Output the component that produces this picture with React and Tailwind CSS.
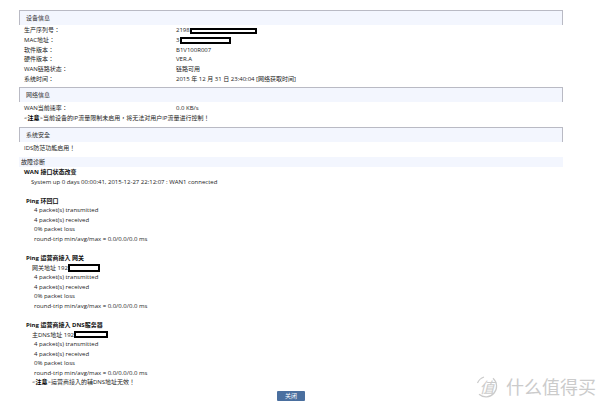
import React from 'react';

const deviceRows = [
  { label: '生产序列号：', value: '2198', mask: 'h-[6px] w-[67px]' },
  { label: 'MAC地址：', value: '3', mask: 'h-[7px] w-[51px] ml-px' },
  { label: '软件版本：', value: 'B1V100R007' },
  { label: '硬件版本：', value: 'VER.A' },
  { label: 'WAN链路状态：', value: '链路可用' },
  { label: '系统时间：', value: '2015 年 12 月 31 日 23:40:04 [网络获取时间]' },
];

const pingResult = [
  '4 packet(s) transmitted',
  '4 packet(s) received',
  '0% packet loss',
  'round-trip min/avg/max = 0.0/0.0/0.0 ms',
];

const SectionTitle = ({ children }) => (
  <h2 className="h-[15px] border border-b-0 border-[#b9bac4] bg-[#f3f6fe] pl-[6px] font-normal leading-[14px] text-[#333]">
    {children}
  </h2>
);

// Black box that hides part of a serial number or address
const Mask = ({ className }) => (
  <span className={`inline-block border-2 border-black bg-white align-middle ${className}`} />
);

const Notice = ({ children }) => (
  <>
    &lt;<b className="text-black">注意</b>&gt;{children}
  </>
);

const PingBlock = ({ title, address, mask, notice, className }) => (
  <section className={`grid auto-rows-fr pl-[7px] ${className}`}>
    <h3 className="font-bold text-[#111]">{title}</h3>
    {address && (
      <p className="pl-[6px]">
        {address}
        <Mask className={mask} />
      </p>
    )}
    {pingResult.map((line) => (
      <p key={line} className="pl-[8px]">{line}</p>
    ))}
    {notice && (
      <p className="pl-[6px]">
        <Notice>{notice}</Notice>
      </p>
    )}
  </section>
);

const Watermark = () => (
  <div className="absolute bottom-[4px] right-[4px] flex items-center gap-[8px] text-[18px] leading-[24px] text-[#cbcbcb]">
    <span className="relative flex h-[22px] w-[22px] items-center justify-center">
      <svg className="absolute inset-0 h-full w-full" viewBox="0 0 22 22" fill="none" stroke="currentColor">
        <path d="M17 2.3A10.5 10.5 0 0 1 3 18.2" strokeWidth="1.2" />
        <path d="M1.5 7A10.5 10.5 0 0 1 8 1" strokeWidth="1.2" />
      </svg>
      <span className="text-[15px] italic leading-[22px]">值</span>
    </span>
    <span>什么值得买</span>
  </div>
);

export default function App() {
  return (
    <main className="relative bg-white pb-[2px] pl-[19px] pr-[37px] pt-[10px] font-['Open_Sans','Noto_Sans_CJK_TC',sans-serif] text-[6px] leading-[9px] text-[#222]">
      <SectionTitle>设备信息</SectionTitle>
      <table className="mb-[3px] ml-[5px] mt-px h-[58px] border-collapse">
        <tbody>
          {deviceRows.map((row) => (
            <tr key={row.label}>
              <th scope="row" className="w-[152px] p-0 text-left font-normal">{row.label}</th>
              <td className="whitespace-nowrap p-0">
                {row.value}
                {row.mask && <Mask className={row.mask} />}
              </td>
            </tr>
          ))}
        </tbody>
      </table>

      <SectionTitle>网络信息</SectionTitle>
      <div className="mb-[4px] ml-[5px] mt-[2px] grid min-h-[19px] auto-rows-fr">
        <div className="flex">
          <span className="w-[152px]">WAN当前速率：</span>
          <span>0.0 KB/s</span>
        </div>
        <p>
          <Notice>当前设备的IP流量限制未启用，将无法对用户IP流量进行控制！</Notice>
        </p>
      </div>

      <SectionTitle>系统安全</SectionTitle>
      <p className="mb-[4px] ml-[5px] mt-[2px]">IDS防范功能启用！</p>

      <h2 className="bg-[#f3f6fe] pl-[2px] font-normal leading-[10px]">故障诊断</h2>
      <div className="mt-px flex flex-col gap-[10px]">
        <section className="grid min-h-[19px] auto-rows-fr pl-[5px]">
          <h3 className="font-bold text-[#111]">WAN 接口状态改变</h3>
          <p className="pl-[7px]">System up 0 days 00:00:41, 2015-12-27 22:12:07 : WAN1 connected</p>
        </section>
        <PingBlock title="Ping 环回口" className="min-h-[47px]" />
        <PingBlock
          title="Ping 运营商接入 网关"
          address="网关地址 192"
          mask="h-[8px] w-[32px]"
          className="min-h-[57px]"
        />
        <PingBlock
          title="Ping 运营商接入 DNS服务器"
          address="主DNS地址 192"
          mask="h-[7px] w-[34px]"
          notice="运营商接入的辅DNS地址无效！"
          className="min-h-[67px]"
        />
      </div>

      <div className="mt-[3px] flex justify-center">
        <button type="button" className="h-[10px] w-[28px] rounded-[1px] bg-[#4a6f9f] leading-[10px] text-white">
          关闭
        </button>
      </div>

      <Watermark />
    </main>
  );
}
